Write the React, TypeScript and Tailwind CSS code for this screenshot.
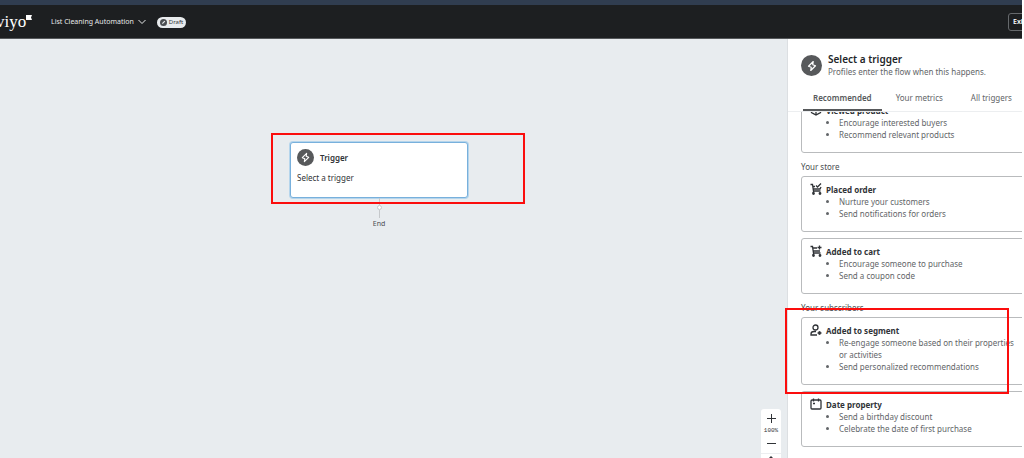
import React, { useState } from "react";

type Trigger = {
  title: string;
  icon: React.ReactNode;
  points: string[];
};

const iconProps = {
  viewBox: "0 0 24 24",
  fill: "none",
  stroke: "currentColor",
  strokeWidth: 2.6,
  className: "h-3 w-3 shrink-0",
};

function Bolt({ className }: { className: string }) {
  return (
    <svg viewBox="0 0 24 24" className={className} fill="none" stroke="currentColor" strokeWidth="2.4" strokeLinejoin="round">
      <path d="M14.500 3 5 12.500l5.500 2L9.500 21l9.500-9.500-5.500-2z" />
    </svg>
  );
}

const BoxIcon = (
  <svg {...iconProps}>
    <path d="M12 2 21 7v10l-9 5-9-5V7zM3 7l9 5 9-5M12 12v10" />
  </svg>
);

const PlacedIcon = (
  <svg {...iconProps}>
    <path d="M1 3h4l2 13h14M6 7h4M7 12h13l2-4M6 20l2-4" />
    <path d="m12 5 3 3 7-7" />
    <circle cx="7" cy="21" r="1.500" />
    <circle cx="20" cy="21" r="1.500" />
  </svg>
);

const CartIcon = (
  <svg {...iconProps}>
    <path d="M1 3h4l2 13h14M6 6h8M7 12h13M6 20l2-4" />
    <path d="M19 1v8M15 5h8" />
    <circle cx="7" cy="21" r="1.500" />
    <circle cx="20" cy="21" r="1.500" />
  </svg>
);

const PersonIcon = (
  <svg {...iconProps}>
    <circle cx="11" cy="7" r="5" />
    <path d="M14 22H2v-2c0-3 3-5 6-5h4" />
    <path d="m19 14 4 4-4 4-4-4z" fill="currentColor" strokeWidth="1" />
  </svg>
);

const CalendarIcon = (
  <svg {...iconProps}>
    <rect x="2" y="4" width="20" height="18" rx="2" />
    <path d="M7 1v6M17 1v6M6 11h4" />
  </svg>
);

const productTriggers: Trigger[] = [
  { title: "Viewed product", icon: BoxIcon, points: ["Encourage interested buyers", "Recommend relevant products"] },
];

const storeTriggers: Trigger[] = [
  { title: "Placed order", icon: PlacedIcon, points: ["Nurture your customers", "Send notifications for orders"] },
  { title: "Added to cart", icon: CartIcon, points: ["Encourage someone to purchase", "Send a coupon code"] },
];

const subscriberTriggers: Trigger[] = [
  {
    title: "Added to segment",
    icon: PersonIcon,
    points: ["Re-engage someone based on their properties or activities", "Send personalized recommendations"],
  },
  { title: "Date property", icon: CalendarIcon, points: ["Send a birthday discount", "Celebrate the date of first purchase"] },
];

const tabs = ["Recommended", "Your metrics", "All triggers"];

function TriggerList({ items }: { items: Trigger[] }) {
  return (
    <div className="flex flex-col gap-1.5">
      {items.map((item) => (
        <button
          key={item.title}
          className="flex items-start gap-1 rounded-[3px] border border-[#b9bbbd] bg-white pt-1.5 pr-3 pb-[11px] pl-2 text-left"
        >
          <span className="text-[#303337]">{item.icon}</span>
          <span className="block">
            <span className="block text-[8px] leading-[13px] font-bold text-[#303337]">{item.title}</span>
            <ul className="list-disc pl-[13px] text-[8px] leading-3 text-[#626568]">
              {item.points.map((point) => (
                <li key={point}>{point}</li>
              ))}
            </ul>
          </span>
        </button>
      ))}
    </div>
  );
}

function Header() {
  return (
    <header className="border-t-[5px] border-b border-t-[#303d50] border-b-[#55585b] bg-[#1d1f21]">
      <div className="flex h-[33px] items-center pt-px text-white">
        <a href="#" className="flex w-[31px] items-center font-['Liberation_Serif',serif] text-[17px] leading-5">
          <span className="-ml-1">viyo</span>
          <svg viewBox="0 0 6 5" className="mb-2.5 h-[5px] w-1.5 shrink-0" fill="currentColor">
            <path d="M0 0h6L5 2.500 6 5H0z" />
          </svg>
        </a>
        <button className="ml-5 flex items-center gap-1 text-[7px] leading-3 text-[#e8e9ea]">
          List Cleaning Automation
          <svg viewBox="0 0 8 6" className="h-1.5 w-2" fill="none" stroke="currentColor">
            <path d="M.5 1 4 4.500 7.500 1" />
          </svg>
        </button>
        <span className="ml-[11px] flex h-[11px] items-center gap-0.5 rounded-full bg-[#e8ebed] px-[3px] text-[6px] text-[#303337]">
          <svg viewBox="0 0 8 8" className="h-[7px] w-[7px]">
            <circle cx="4" cy="4" r="4" fill="#4b4e51" />
            <path d="m2.300 5.700.4-1.500 2.300-2.300 1 1-2.300 2.300z" fill="#e8ebed" />
          </svg>
          Draft
        </span>
        <div className="ml-auto flex w-3.5 overflow-hidden">
          <button className="h-[18px] w-6 shrink-0 rounded-[3px] border border-[#66696c] pl-1 text-left text-[7px] font-semibold">
            Exit
          </button>
        </div>
      </div>
    </header>
  );
}

function Canvas() {
  return (
    <main className="relative flex-1 overflow-hidden bg-[#e8ecef]">
      <div className="absolute top-[103px] left-[290px] flex w-[178px] flex-col items-center">
        <button className="flex h-14 w-full flex-col rounded-[3px] border border-[#78b0dc] bg-white px-1.5 pt-1.5 text-left text-[#303337] shadow-[0_0_0_1px_#b5d5ec]">
          <span className="flex items-center gap-1.5 text-[8px] font-semibold">
            <span className="flex h-[17px] w-[17px] items-center justify-center rounded-full bg-[#57595b] text-white">
              <Bolt className="h-[11px] w-[11px]" />
            </span>
            Trigger
          </span>
          <span className="mt-1.5 block text-[8px] leading-3">Select a trigger</span>
        </button>
        <span className="h-[7px] w-px bg-[#c5c8cb]" />
        <span className="h-[5px] w-[5px] rounded-full border border-[#c5c8cb] bg-white" />
        <span className="h-2 w-px bg-[#c5c8cb]" />
        <span className="text-[7px] leading-3 text-[#4b4e51]">End</span>
      </div>

      {/* Zoom controls */}
      <div className="absolute top-[370px] right-1.5 flex w-5 flex-col items-center rounded-[3px] bg-white text-[#303337]">
        <button aria-label="Zoom in" className="flex h-[19px] w-full items-center justify-center">
          <svg viewBox="0 0 9 9" className="h-[9px] w-[9px]" stroke="currentColor">
            <path d="M4.500 0v9M0 4.500h9" />
          </svg>
        </button>
        <span className="font-['Liberation_Mono',monospace] text-[6px] leading-[6px]">100%</span>
        <button aria-label="Zoom out" className="flex h-[19px] w-full items-center justify-center">
          <svg viewBox="0 0 9 9" className="h-[9px] w-[9px]" stroke="currentColor">
            <path d="M0 4.500h9" />
          </svg>
        </button>
        <button aria-label="Fit to view" className="flex h-5 w-full justify-center border-t border-[#eceef0] pt-0.5">
          <svg viewBox="0 0 8 12" className="h-3 w-2" fill="currentColor">
            <path d="M4 0 7 3H5v6h2l-3 3-3-3h2V3H1z" />
          </svg>
        </button>
      </div>

      <div className="pointer-events-none absolute top-[94px] left-[271px] h-[71px] w-[254px] border-2 border-[#fb0d0d]" />
    </main>
  );
}

function TriggerPanel() {
  const [active, setActive] = useState(tabs[0]);

  return (
    <aside className="relative flex w-[235px] shrink-0 flex-col border-l border-[#dcdfe2] bg-white">
      <div className="flex items-center gap-1.5 pt-3.5 pl-[13px]">
        <span className="flex h-[21px] w-[21px] shrink-0 items-center justify-center rounded-full bg-[#57595b] text-white">
          <Bolt className="h-3 w-3" />
        </span>
        <div>
          <h1 className="text-[10px] leading-[13px] font-semibold text-[#232629]">Select a trigger</h1>
          <p className="text-[8px] leading-3 text-[#626568]">Profiles enter the flow when this happens.</p>
        </div>
      </div>

      <div className="mt-2 flex border-b border-[#eceef0] pl-[15px] text-[8px] whitespace-nowrap text-[#626568]">
        {tabs.map((tab) => (
          <button
            key={tab}
            onClick={() => setActive(tab)}
            className={
              tab === active
                ? "h-[25px] border-b-2 border-[#57595b] px-2.5 font-semibold text-[#57595b]"
                : "h-[25px] border-b-2 border-transparent px-3.5"
            }
          >
            {tab}
          </button>
        ))}
      </div>

      <div className="min-h-0 flex-1 overflow-hidden">
        <div className="-mt-[15px] -mr-3 pl-[13px]">
          <TriggerList items={productTriggers} />
          <h2 className="pt-2 pb-[3px] text-[8px] leading-3 text-[#4b4e51]">Your store</h2>
          <TriggerList items={storeTriggers} />
          <h2 className="pt-2 pb-[3px] text-[8px] leading-3 text-[#4b4e51]">Your subscribers</h2>
          <TriggerList items={subscriberTriggers} />
        </div>
      </div>

      <div className="pointer-events-none absolute top-[269px] -left-[3px] h-[86px] w-56 border-2 border-[#fb0d0d]" />
    </aside>
  );
}

function App() {
  return (
    <div className="flex h-screen flex-col overflow-hidden bg-white pr-0.5 font-['Noto_Sans',sans-serif]">
      <Header />
      <div className="flex min-h-0 flex-1">
        <Canvas />
        <TriggerPanel />
      </div>
    </div>
  );
}

export default App;
